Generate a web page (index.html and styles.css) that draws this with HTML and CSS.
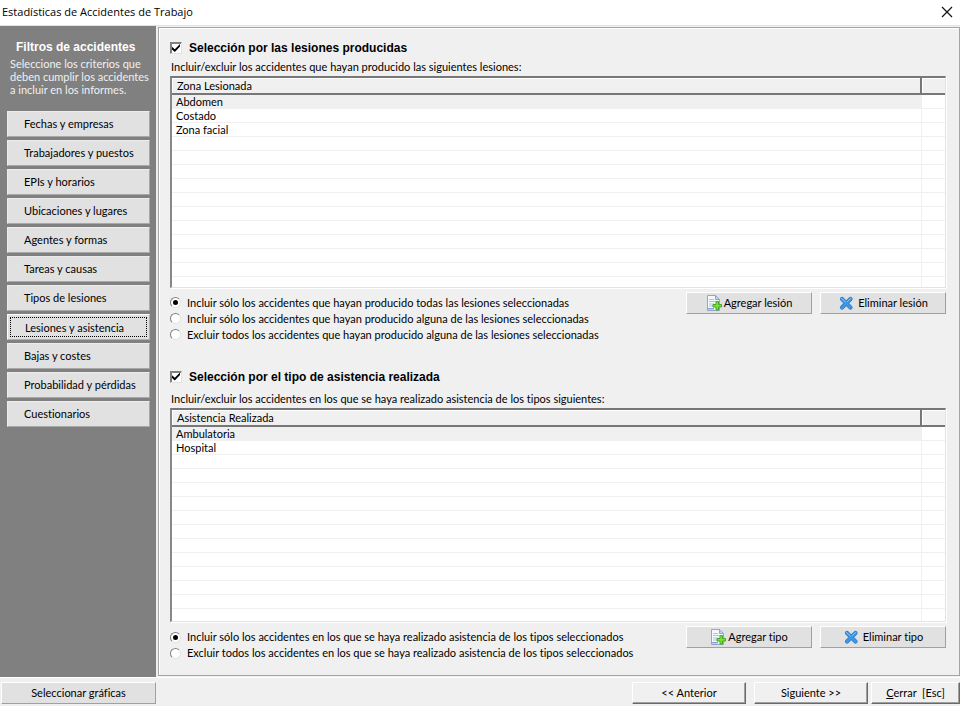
FILE: index.html
```
<!DOCTYPE html>
<html lang="es">
<head>
    <meta charset="UTF-8">
    <meta name="viewport" content="width=device-width, initial-scale=1.0">
    <title>Estadísticas de Accidentes de Trabajo</title>
    <link rel="stylesheet" href="styles.css">
</head>
<body>
    <svg class="sprite" aria-hidden="true">
        <symbol id="icon-add" viewBox="0 0 16 16">
            <path d="M1.5 .5h8l4 4v11h-12z" fill="#f4f8fd" stroke="#8fa6cf"/>
            <path d="M9.5 .5v4h4z" fill="#c3d6f0" stroke="#8fa6cf"/>
            <path d="M3 4.5h5M3 6.500h7M3 9h5M3 11h4" stroke="#b4c3de"/>
            <path d="M2 13h6v1.5H2z" fill="#8b9fd0"/>
            <path d="M10.500 6.500h2v3h3v2.500h-3v3h-2.500v-3h-3v-2.500h3v-3z" fill="#7be32c" stroke="#43a52a"/>
        </symbol>
        <symbol id="icon-delete" viewBox="0 0 16 16">
            <path d="M4 4l8.500 8.500M12.500 4L4 12.500" stroke="#2f78bf" stroke-width="4.200" stroke-linecap="round"/>
            <path d="M4 4l8.500 8.500M12.500 4L4 12.500" stroke="#3f95e2" stroke-width="3" stroke-linecap="round"/>
            <path d="M3.500 3.500l4 3.500M12.500 3.500l-3 3" stroke="#8cc6f5" stroke-linecap="round"/>
        </symbol>
    </svg>

    <div class="window">
        <header class="titlebar">
            <h1>Estadísticas de Accidentes de Trabajo</h1>
            <button type="button" class="close" aria-label="Cerrar ventana">
                <svg viewBox="0 0 12 12" width="12" height="12"><path d="M1 1l10 10M11 1L1 11" stroke="#111" stroke-width="1.2"/></svg>
            </button>
        </header>

        <div class="main">
            <aside class="sidebar">
                <h2>Filtros de accidentes</h2>
                <p>Seleccione los criterios que deben cumplir los accidentes a incluir en los informes.</p>
                <nav class="filters">
                    <button type="button">Fechas y empresas</button>
                    <button type="button">Trabajadores y puestos</button>
                    <button type="button">EPIs y horarios</button>
                    <button type="button">Ubicaciones y lugares</button>
                    <button type="button">Agentes y formas</button>
                    <button type="button">Tareas y causas</button>
                    <button type="button">Tipos de lesiones</button>
                    <button type="button" class="active">Lesiones y asistencia</button>
                    <button type="button">Bajas y costes</button>
                    <button type="button">Probabilidad y pérdidas</button>
                    <button type="button">Cuestionarios</button>
                </nav>
            </aside>

            <main class="panel">
                <section class="group group-injuries">
                    <label class="group-title"><input type="checkbox" checked> Selección por las lesiones producidas</label>
                    <p class="hint">Incluir/excluir los accidentes que hayan producido las siguientes lesiones:</p>
                    <div class="list">
                        <table>
                            <thead>
                                <tr><th>Zona Lesionada</th><th class="extra"></th></tr>
                            </thead>
                            <tbody>
                                <tr class="selected"><td>Abdomen</td><td></td></tr>
                                <tr><td>Costado</td><td></td></tr>
                                <tr><td>Zona facial</td><td></td></tr>
                            </tbody>
                        </table>
                        <div class="empty-rows"></div>
                    </div>
                    <div class="group-footer">
                        <div class="options">
                            <label><input type="radio" name="lesiones" checked> Incluir sólo los accidentes que hayan producido todas las lesiones seleccionadas</label>
                            <label><input type="radio" name="lesiones"> Incluir sólo los accidentes que hayan producido alguna de las lesiones seleccionadas</label>
                            <label><input type="radio" name="lesiones"> Excluir todos los accidentes que hayan producido alguna de las lesiones seleccionadas</label>
                        </div>
                        <div class="actions">
                            <button type="button" class="btn"><svg class="icon"><use href="#icon-add"/></svg>Agregar lesión</button>
                            <button type="button" class="btn btn-delete"><svg class="icon"><use href="#icon-delete"/></svg>Eliminar lesión</button>
                        </div>
                    </div>
                </section>

                <section class="group group-care">
                    <label class="group-title"><input type="checkbox" checked> Selección por el tipo de asistencia realizada</label>
                    <p class="hint">Incluir/excluir los accidentes en los que se haya realizado asistencia de los tipos siguientes:</p>
                    <div class="list">
                        <table>
                            <thead>
                                <tr><th>Asistencia Realizada</th><th class="extra"></th></tr>
                            </thead>
                            <tbody>
                                <tr class="selected"><td>Ambulatoria</td><td></td></tr>
                                <tr><td>Hospital</td><td></td></tr>
                            </tbody>
                        </table>
                        <div class="empty-rows"></div>
                    </div>
                    <div class="group-footer">
                        <div class="options">
                            <label><input type="radio" name="asistencia" checked> Incluir sólo los accidentes en los que se haya realizado asistencia de los tipos seleccionados</label>
                            <label><input type="radio" name="asistencia"> Excluir todos los accidentes en los que se haya realizado asistencia de los tipos seleccionados</label>
                        </div>
                        <div class="actions">
                            <button type="button" class="btn"><svg class="icon"><use href="#icon-add"/></svg>Agregar tipo</button>
                            <button type="button" class="btn btn-delete"><svg class="icon"><use href="#icon-delete"/></svg>Eliminar tipo</button>
                        </div>
                    </div>
                </section>
            </main>
        </div>

        <footer class="bottombar">
            <button type="button" class="btn btn-charts">Seleccionar gráficas</button>
            <div class="nav-buttons">
                <button type="button" class="btn btn-nav">&lt;&lt; Anterior</button>
                <button type="button" class="btn btn-nav">Siguiente &gt;&gt;</button>
            </div>
            <button type="button" class="btn btn-nav btn-close"><span><u>C</u>errar&nbsp; [Esc]</span></button>
        </footer>
    </div>
</body>
</html>
```
FILE: styles.css
```
* {
    box-sizing: border-box;
}

body {
    margin: 0;
    background: #f0f0f0;
    color: #000;
    font-family: Lato, Arial, sans-serif;
    font-size: 11px;
    font-variant-ligatures: none;
    line-height: 14px;
}

h1, h2, p {
    margin: 0;
}

button {
    font-family: inherit;
    font-size: inherit;
    font-variant-ligatures: none;
    line-height: inherit;
    color: inherit;
    white-space: nowrap;
}

.sprite {
    position: absolute;
    width: 0;
    height: 0;
}

.window {
    display: flex;
    flex-direction: column;
    min-height: 100vh;
}

/* title bar */
.titlebar {
    display: flex;
    justify-content: space-between;
    align-items: center;
    height: 26px;
    padding: 0 6px 2px 2px;
    background: #fff;
    border-bottom: 1px solid #e3e3e3;
}

.titlebar h1 {
    font-family: "Open Sans", "Noto Sans", sans-serif;
    font-size: 11px;
    font-weight: normal;
}

.close {
    display: flex;
    padding: 1px;
    border: none;
    background: none;
}

.main {
    display: flex;
    flex: 1;
    gap: 2px;
}

/* sidebar */
.sidebar {
    width: 156px;
    flex-shrink: 0;
    padding: 14px 6px 0 7px;
    background: #808080;
    color: #fff;
}

.sidebar h2 {
    padding-left: 9px;
    font-family: "Liberation Sans", Arial, sans-serif;
    font-size: 12px;
    line-height: 14px;
}

.sidebar p {
    padding: 3px 0 0 3px;
    line-height: 13px;
    color: #f0f0f0;
}

.filters {
    display: flex;
    flex-direction: column;
    gap: 3px;
    margin-top: 15px;
}

.filters button {
    height: 26px;
    padding: 0 0 0 16px;
    border: 1px solid;
    border-color: #ececec #a8a8a8 #a8a8a8 #ececec;
    background: #e1e1e1;
    color: #000;
    text-align: left;
}

.filters .active {
    border-color: #fff #b0b0b0 #b0b0b0 #fff;
    padding: 1px 0 0 17px;
    outline: 1px dotted #000;
    outline-offset: -4px;
}

/* panel */
.panel {
    display: flex;
    flex-direction: column;
    flex: 1;
    gap: 24px;
    margin: 1px 0;
    padding: 10px 13px 14px 11px;
    border: 1px solid #a5a5a5;
    box-shadow: inset 1px 1px #fff;
}

.group {
    display: flex;
    flex-direction: column;
    flex: 1;
}

/* one option more than the other group */
.group-injuries {
    flex-basis: 10px;
}

.group-title {
    display: flex;
    align-items: center;
    gap: 7px;
    height: 20px;
    font-family: "Liberation Sans", Arial, sans-serif;
    font-size: 12px;
    font-weight: bold;
}

.hint {
    margin: 2px 0 2px 1px;
}

.group-care .hint {
    margin-top: 5px;
}

input[type="checkbox"],
input[type="radio"] {
    display: grid;
    place-items: center;
    flex-shrink: 0;
    width: 12px;
    height: 12px;
    margin: 0;
    appearance: none;
    background: #fff;
    border: 1px solid;
    border-color: #808080 #e3e3e3 #e3e3e3 #808080;
}

input[type="checkbox"] {
    box-shadow: inset 1px 1px #808080;
}

input[type="radio"] {
    width: 11px;
    height: 11px;
    border-radius: 50%;
}

input[type="checkbox"]:checked::before {
    content: "";
    width: 8px;
    height: 8px;
    background: #000;
    clip-path: polygon(0 35%, 35% 65%, 100% 0, 100% 32%, 35% 100%, 0 68%);
}

input[type="radio"]:checked::before {
    content: "";
    width: 5px;
    height: 5px;
    border-radius: 50%;
    background: #000;
}

/* lists */
.list {
    display: flex;
    flex-direction: column;
    flex: 1;
    border-style: solid;
    border-width: 2px 1px 1px 2px;
    border-color: #777 #e3e3e3 #e3e3e3 #888;
    box-shadow: 1px 1px #fff;
    background: #fff;
}

.list table {
    width: 100%;
    border-collapse: separate;
    border-spacing: 0;
}

.list th {
    height: 17px;
    padding: 0 0 0 5px;
    line-height: 13px;
    background: #f0f0f0;
    border-right: 2px solid #777;
    border-bottom: 2px solid #777;
    box-shadow: inset 1px 1px #fff;
    font-weight: normal;
    text-align: left;
}

.list .extra {
    width: 23px;
    border-right: none;
}

.list td {
    height: 14px;
    padding: 0 0 0 4px;
    line-height: 13px;
    border-right: 1px solid #f0f0f0;
    border-bottom: 1px solid #f0f0f0;
}

.list td:last-child {
    border-right: none;
}

.list .selected td:first-child {
    background: #f0f0f0;
}

/* grid lines below the last filled row */
.empty-rows {
    flex: 1;
    background:
        linear-gradient(#f0f0f0, #f0f0f0) right 23px top / 1px 100% no-repeat,
        repeating-linear-gradient(#fff 0 13px, #f0f0f0 13px 14px);
}

/* options and actions under each list */
.group-footer {
    display: flex;
    justify-content: space-between;
    align-items: flex-start;
    padding-top: 4px;
}

.options {
    padding-top: 3px;
}

.options label {
    display: flex;
    align-items: center;
    gap: 6px;
    height: 16px;
}

.actions {
    display: flex;
    gap: 8px;
}

.btn {
    display: flex;
    align-items: center;
    justify-content: center;
    width: 126px;
    height: 22px;
    padding: 0;
    gap: 2px;
    border: 1px solid;
    border-color: #fff #a0a0a0 #a0a0a0 #fff;
    background: #e1e1e1;
}

.btn-delete {
    gap: 4px;
}

.icon {
    width: 16px;
    height: 16px;
}

/* bottom bar */
.bottombar {
    display: flex;
    align-items: center;
    gap: 3px;
    height: 29px;
    padding: 2px 0 0 1px;
    border-top: 1px solid #fff;
}

.btn-charts {
    width: 155px;
}

.nav-buttons {
    display: flex;
    gap: 8px;
    margin-left: auto;
}

.btn-nav {
    width: 114px;
    background: #f0f0f0;
    border-color: #fff #696969 #696969 #fff;
    box-shadow: inset -1px -1px #a0a0a0;
}

.btn-close {
    width: 89px;
}
```
